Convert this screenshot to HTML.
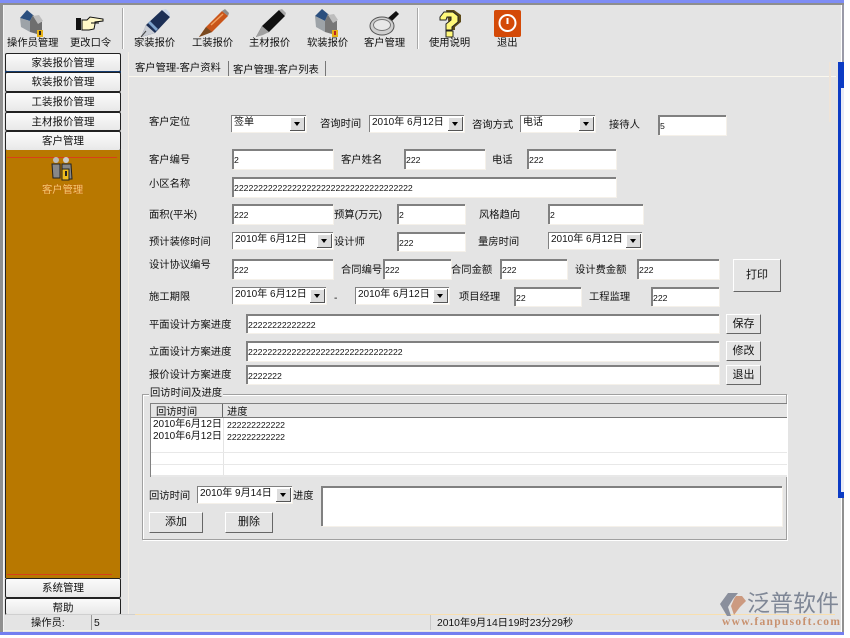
<!DOCTYPE html>
<html><head><meta charset="utf-8"><style>
html,body{margin:0;padding:0;background:#fff;width:850px;height:638px;overflow:hidden}
#w{position:absolute;left:0;top:0;width:844px;height:635px;background:#e4e4e4;overflow:hidden;font-family:"Liberation Sans","Noto Sans CJK SC",sans-serif;font-size:10.3px;color:#111;line-height:12px}
#w div,#w span,#w svg{position:absolute}
.t{white-space:nowrap;margin-top:2px}
.i{background:#fff;border-top:2px solid #808080;border-left:2px solid #808080;box-sizing:border-box;font-size:8.7px;line-height:19px;padding-left:0;white-space:nowrap;box-shadow:1px 1px 0 #f5f1ea}
.d{background:#fff;border-top:1px solid #808080;border-left:1px solid #808080;box-sizing:border-box;font-size:10px;line-height:14px;padding-left:2px;white-space:nowrap;box-shadow:1px 1px 0 #f5f1ea;height:17px}
.a{right:1px;top:1px;width:15px;height:14px;background:#dcdcdc;border-right:1px solid #555;border-bottom:1px solid #555;box-shadow:inset 1px 1px 0 #fff;box-sizing:border-box}
.a:after{content:"";position:absolute;left:4px;top:5px;border-left:3px solid transparent;border-right:3px solid transparent;border-top:4px solid #000}
.b{background:#e4e4e4;border-top:1px solid #fff;border-left:1px solid #fff;border-right:1px solid #666;border-bottom:1px solid #666;box-sizing:border-box;text-align:center;font-size:11px}
.m{left:5px;width:116px;background:linear-gradient(#fbfbfb,#e8e8e8);border:1px solid #222;border-radius:2px;box-sizing:border-box;text-align:center;font-size:10.5px;line-height:18px}
</style></head><body><div id="w">
<div style="left:0;top:0;width:844px;height:3px;background:#7f8df5"></div>
<div style="left:0;top:3px;width:844px;height:2px;background:#8e8e8e"></div>
<div style="left:0;top:3px;width:3px;height:630px;background:#8f8f8f"></div>
<div style="left:3px;top:5px;width:1px;height:628px;background:#f4f4f4"></div>
<div style="left:841px;top:5px;width:1px;height:58px;background:#fff"></div>
<div style="left:842px;top:5px;width:2px;height:58px;background:#9a9aa8"></div>
<div style="left:838px;top:62px;width:6px;height:436px;background:#0c3bc4"></div>
<div style="left:841px;top:88px;width:3px;height:404px;background:#e8eaf6"></div>
<div style="left:841px;top:498px;width:1px;height:134px;background:#fff"></div>
<div style="left:842px;top:498px;width:2px;height:134px;background:#909090"></div>
<div style="left:0;top:632px;width:844px;height:3px;background:#747ff0"></div>

<!-- toolbar -->
<div style="left:122px;top:8px;width:1px;height:41px;background:#a8a8a8"></div>
<div style="left:123px;top:8px;width:1px;height:41px;background:#fff"></div>
<div style="left:417px;top:8px;width:1px;height:41px;background:#a8a8a8"></div>
<div style="left:418px;top:8px;width:1px;height:41px;background:#fff"></div>

<svg style="left:18px;top:8px" width="30" height="30" viewBox="0 0 30 30"><path d="M2 10 9 2l6 5-3 6z" fill="#2b4f7e"/><path d="M2 10l10 3 0 11-9-5z" fill="#9da3a8"/><path d="M12 13l3-6 9 7 0 9-5 3-7-2z" fill="#6e6e6e"/><path d="M15 8l6-1 4 6-5 3z" fill="#bdbdbd"/><rect x="19" y="22" width="6" height="7" fill="#e6b21a"/><rect x="21" y="23" width="2" height="4" fill="#222"/></svg>
<svg style="left:75px;top:15px" width="30" height="18" viewBox="0 0 30 18"><rect x="1" y="3" width="5" height="12" fill="#111"/><path d="M7 5h5l3-3 13 2v2l-8 1v2l-1 5-5 1H7z" fill="#fff8c8" stroke="#111"/><path d="M16 8h8" stroke="#111"/></svg>
<svg style="left:140px;top:8px" width="32" height="30" viewBox="0 0 32 30"><path d="M1 29 6 17 22 2l8 7L15 25z" fill="#1c2f55"/><path d="M22 2l4-1 4 4v4z" fill="#c9d5e6"/><path d="M6 17l9 8-7 2-7 2z" fill="#c9cdd4"/><path d="M8 15l8 8 2-2-8-8z" fill="#7ea3cc"/><path d="M1 29 6 23" stroke="#444"/></svg>
<svg style="left:198px;top:8px" width="32" height="30" viewBox="0 0 32 30"><path d="M1 29 8 19 24 3l6 5L14 24z" fill="#c9551a"/><path d="M24 3l3-2 4 4-1 3z" fill="#8d8d8d"/><path d="M8 19l6 5-5 2-8 3z" fill="#7a4a20"/><path d="M13 17 25 6" stroke="#f0a060" stroke-width="1.500"/></svg>
<svg style="left:255px;top:8px" width="32" height="30" viewBox="0 0 32 30"><path d="M1 29 7 18 24 2l6 6L14 24z" fill="#111"/><path d="M24 2l3-1 4 4-1 3z" fill="#a8a8a8"/><path d="M7 18l7 6-6 3-7 2z" fill="#a0a0a0"/></svg>
<svg style="left:313px;top:8px" width="30" height="30" viewBox="0 0 30 30"><path d="M2 8 9 1l6 5-3 7z" fill="#2b4f7e"/><path d="M2 8l10 5 0 11-9-5z" fill="#9da3a8"/><path d="M12 13l3-7 9 7 0 9-5 4-7-2z" fill="#777"/><path d="M15 7l6-1 4 6-5 3z" fill="#bdbdbd"/><rect x="19" y="22" width="6" height="7" fill="#e6b21a"/><rect x="21" y="23" width="2" height="4" fill="#b22"/></svg>
<svg style="left:369px;top:9px" width="32" height="28" viewBox="0 0 32 28"><path d="M19 9 27 2l3 3-7 7z" fill="#111"/><ellipse cx="13" cy="17" rx="12" ry="9" fill="#cfcfcf" stroke="#555"/><ellipse cx="13" cy="16" rx="8.500" ry="5.500" fill="#e8e8e8" stroke="#777"/></svg>
<svg style="left:438px;top:9px" width="26" height="29" viewBox="0 0 26 29"><path d="M8 1h8l7 5v7l-6 5v3h-5" fill="#5c4a18"/><path d="M2 8 6 3h9l5 4v6l-6 5v3H8v-6l5-4V8H9L8 11H2z" fill="#fff87a" stroke="#222"/><rect x="8" y="22" width="7" height="6" fill="#fff87a" stroke="#222"/></svg>
<svg style="left:494px;top:10px" width="27" height="27" viewBox="0 0 27 27"><rect width="27" height="27" rx="2" fill="#d44a08"/><circle cx="13.500" cy="13" r="8" fill="none" stroke="#fff" stroke-width="2"/><path d="M13.500 8v6" stroke="#fff" stroke-width="2"/></svg>

<span class="t" style="left:7px;top:36px">操作员管理</span>
<span class="t" style="left:70px;top:36px">更改口令</span>
<span class="t" style="left:134px;top:36px">家装报价</span>
<span class="t" style="left:192px;top:36px">工装报价</span>
<span class="t" style="left:249px;top:36px">主材报价</span>
<span class="t" style="left:307px;top:36px">软装报价</span>
<span class="t" style="left:364px;top:36px">客户管理</span>
<span class="t" style="left:429px;top:36px">使用说明</span>
<span class="t" style="left:497px;top:36px">退出</span>

<!-- left menu -->
<div class="m" style="top:53px;height:19px">家装报价管理</div>
<div style="left:5px;top:71px;width:116px;height:2px;background:#143c70"></div>
<div class="m" style="top:72px;height:20px">软装报价管理</div>
<div class="m" style="top:92px;height:20px">工装报价管理</div>
<div class="m" style="top:112px;height:19px">主材报价管理</div>
<div class="m" style="top:131px;height:20px">客户管理</div>
<div style="left:5px;top:150px;width:116px;height:428px;background:#b87800;border-left:1px solid #222;border-right:1px solid #222;box-sizing:border-box"></div>
<div style="left:7px;top:157px;width:110px;height:1px;background:#d8401a"></div>
<div style="left:7px;top:574px;width:105px;height:1px;background:#d8401a"></div>
<svg style="left:50px;top:155px" width="24" height="28" viewBox="0 0 24 28"><circle cx="6" cy="5" r="3" fill="#bbb"/><circle cx="16" cy="5" r="3" fill="#ccc"/><path d="M2 9h8v14H3zM12 9h9l1 15H12z" fill="#888" stroke="#222"/><rect x="12" y="14" width="7" height="11" fill="#eebc1c" stroke="#222"/><rect x="15" y="16" width="2" height="5" fill="#222"/></svg>
<span class="t" style="left:42px;top:183px;color:#f0d070;text-shadow:0 0 1px #d8401a">客户管理</span>
<div class="m" style="top:578px;height:20px">系统管理</div>
<div class="m" style="top:598px;height:17px">帮助</div>

<!-- tabs -->
<span class="t" style="left:135px;top:61px">客户管理-客户资料</span>
<div style="left:228px;top:61px;width:1px;height:15px;background:#777"></div>
<span class="t" style="left:233px;top:63px">客户管理-客户列表</span>
<div style="left:325px;top:61px;width:1px;height:15px;background:#777"></div>
<div style="left:128px;top:76px;width:708px;height:1px;background:#fbf8ee"></div>
<div style="left:128px;top:52px;width:1px;height:562px;background:#f3eee6"></div>
<div style="left:829px;top:62px;width:2px;height:60px;background:#efe4d8"></div>

<!-- row 1 -->
<span class="t" style="left:149px;top:115px">客户定位</span>
<div class="d" style="left:231px;top:115px;width:75px">签单<div class="a"></div></div>
<span class="t" style="left:320px;top:117px">咨询时间</span>
<div class="d" style="left:369px;top:115px;width:95px">2010年 6月12日<div class="a"></div></div>
<span class="t" style="left:472px;top:118px">咨询方式</span>
<div class="d" style="left:520px;top:115px;width:75px">电话<div class="a"></div></div>
<span class="t" style="left:609px;top:118px">接待人</span>
<div class="i" style="left:658px;top:115px;width:68px;height:20px">5</div>

<span class="t" style="left:149px;top:153px">客户编号</span>
<div class="i" style="left:232px;top:149px;width:101px;height:20px">2</div>
<span class="t" style="left:341px;top:153px">客户姓名</span>
<div class="i" style="left:404px;top:149px;width:81px;height:20px">222</div>
<span class="t" style="left:492px;top:153px">电话</span>
<div class="i" style="left:527px;top:149px;width:89px;height:20px">222</div>

<span class="t" style="left:149px;top:177px">小区名称</span>
<div class="i" style="left:232px;top:177px;width:384px;height:20px">2222222222222222222222222222222222222</div>

<span class="t" style="left:149px;top:208px">面积(平米)</span>
<div class="i" style="left:232px;top:204px;width:101px;height:20px">222</div>
<span class="t" style="left:334px;top:208px">预算(万元)</span>
<div class="i" style="left:397px;top:204px;width:68px;height:20px">2</div>
<span class="t" style="left:479px;top:208px">风格趋向</span>
<div class="i" style="left:548px;top:204px;width:95px;height:20px">2</div>

<span class="t" style="left:149px;top:235px">预计装修时间</span>
<div class="d" style="left:232px;top:232px;width:101px">2010年 6月12日<div class="a"></div></div>
<span class="t" style="left:334px;top:235px">设计师</span>
<div class="i" style="left:397px;top:232px;width:68px;height:19px">222</div>
<span class="t" style="left:478px;top:235px">量房时间</span>
<div class="d" style="left:548px;top:232px;width:94px">2010年 6月12日<div class="a"></div></div>

<span class="t" style="left:149px;top:258px">设计协议编号</span>
<div class="i" style="left:232px;top:259px;width:101px;height:20px">222</div>
<span class="t" style="left:341px;top:263px">合同编号</span>
<div class="i" style="left:383px;top:259px;width:68px;height:20px">222</div>
<span class="t" style="left:451px;top:263px">合同金额</span>
<div class="i" style="left:500px;top:259px;width:67px;height:20px">222</div>
<span class="t" style="left:575px;top:263px">设计费金额</span>
<div class="i" style="left:637px;top:259px;width:82px;height:20px">222</div>
<div class="b" style="left:733px;top:259px;width:48px;height:33px;line-height:31px">打印</div>

<span class="t" style="left:149px;top:290px">施工期限</span>
<div class="d" style="left:232px;top:287px;width:94px">2010年 6月12日<div class="a"></div></div>
<span class="t" style="left:334px;top:291px">-</span>
<div class="d" style="left:355px;top:287px;width:94px">2010年 6月12日<div class="a"></div></div>
<span class="t" style="left:459px;top:290px">项目经理</span>
<div class="i" style="left:514px;top:287px;width:67px;height:19px">22</div>
<span class="t" style="left:589px;top:290px">工程监理</span>
<div class="i" style="left:651px;top:287px;width:68px;height:19px">222</div>

<span class="t" style="left:149px;top:318px">平面设计方案进度</span>
<div class="i" style="left:246px;top:314px;width:473px;height:19px">22222222222222</div>
<div class="b" style="left:726px;top:314px;width:35px;height:20px;line-height:18px">保存</div>
<span class="t" style="left:149px;top:345px">立面设计方案进度</span>
<div class="i" style="left:246px;top:341px;width:473px;height:20px">22222222222222222222222222222222</div>
<div class="b" style="left:726px;top:341px;width:35px;height:20px;line-height:18px">修改</div>
<span class="t" style="left:149px;top:368px">报价设计方案进度</span>
<div class="i" style="left:246px;top:365px;width:473px;height:19px">2222222</div>
<div class="b" style="left:726px;top:365px;width:35px;height:20px;line-height:18px">退出</div>

<!-- group -->
<div style="left:142px;top:394px;width:645px;height:146px;border:1px solid #a0a0a0;box-shadow:1px 1px 0 #fff,inset 1px 1px 0 #fff;box-sizing:border-box"></div>
<span class="t" style="left:149px;top:386px;background:#e4e4e4;padding:0 1px">回访时间及进度</span>
<div style="left:150px;top:403px;width:637px;height:74px;background:#fff;border-top:1px solid #808080;border-left:1px solid #808080;box-sizing:border-box"></div>
<div style="left:151px;top:404px;width:636px;height:13px;background:#e4e4e4;border-bottom:1px solid #777"></div>
<div style="left:222px;top:404px;width:1px;height:13px;background:#666"></div>
<div style="left:223px;top:418px;width:1px;height:59px;background:#e4e4e4"></div>
<div style="left:151px;top:452px;width:636px;height:1px;background:#e8e8e8"></div>
<div style="left:151px;top:464px;width:636px;height:1px;background:#e8e8e8"></div>
<div style="left:151px;top:475px;width:636px;height:2px;background:#e8e8e8"></div>
<span class="t" style="left:156px;top:405px">回访时间</span>
<span class="t" style="left:227px;top:405px">进度</span>
<span class="t" style="left:153px;top:417px;font-size:10px">2010年6月12日</span>
<span class="t" style="left:227px;top:417px;font-size:8.7px">222222222222</span>
<span class="t" style="left:153px;top:429px;font-size:10px">2010年6月12日</span>
<span class="t" style="left:227px;top:429px;font-size:8.7px">222222222222</span>

<span class="t" style="left:149px;top:489px">回访时间</span>
<div class="d" style="left:197px;top:486px;width:95px">2010年 9月14日<div class="a"></div></div>
<span class="t" style="left:293px;top:489px">进度</span>
<div class="i" style="left:321px;top:486px;width:461px;height:40px"></div>
<div class="b" style="left:149px;top:512px;width:54px;height:21px;line-height:19px">添加</div>
<div class="b" style="left:225px;top:512px;width:48px;height:21px;line-height:19px">删除</div>

<!-- status -->
<div style="left:135px;top:614px;width:700px;height:1px;background:#f8dfae"></div>
<div style="left:6px;top:614px;width:129px;height:1px;background:#cfcfcf"></div>
<div style="left:91px;top:615px;width:1px;height:16px;background:#999"></div>
<div style="left:430px;top:615px;width:1px;height:16px;background:#c8c8c8"></div>
<div style="left:4px;top:630px;width:837px;height:1px;background:#f2f2e4"></div>
<span class="t" style="left:31px;top:616px">操作员:</span>
<span class="t" style="left:94px;top:616px">5</span>
<span class="t" style="left:437px;top:616px">2010年9月14日19时23分29秒</span>

<!-- logo -->
<svg style="left:720px;top:593px" width="27" height="23" viewBox="0 0 27 23"><path d="M8 0h10l-5 6-5 8 3 9H7L0 11z" fill="#8a8f9c"/><path d="M16 3h6l4 5-6 6-6 8-3-9 3-7z" fill="#cc9a80"/></svg>
<span class="t" style="left:747px;top:589px;font-size:23px;line-height:24px;color:#7f8796">泛普软件</span>
<span class="t" style="left:722px;top:614px;font-family:'Liberation Serif',serif;font-weight:bold;font-size:11.500px;letter-spacing:1.300px;color:#c8916f">www.fanpusoft.com</span>
</div></body></html>
